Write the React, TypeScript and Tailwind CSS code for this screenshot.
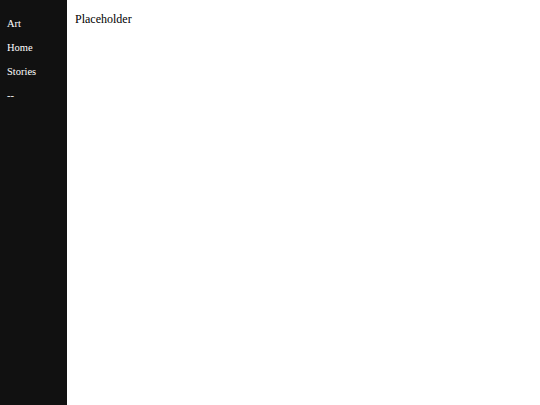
export default function App() {
  return (
    <div className="flex h-[405px] w-[540px] font-['Liberation_Serif',serif]">
      <div className="w-[67px] shrink-0 bg-[#111111] px-[7px] pt-[16px] text-[10.5px] text-white">
        <div className="flex flex-col gap-[8px] leading-[16px]">
          <div>Art</div>
          <div>Home</div>
          <div>Stories</div>
          <div>--</div>
        </div>
      </div>
      <div className="flex-1 bg-white px-[8px] pt-[11px] text-[12px] leading-[16px] text-black">
        Placeholder
      </div>
    </div>
  );
}
